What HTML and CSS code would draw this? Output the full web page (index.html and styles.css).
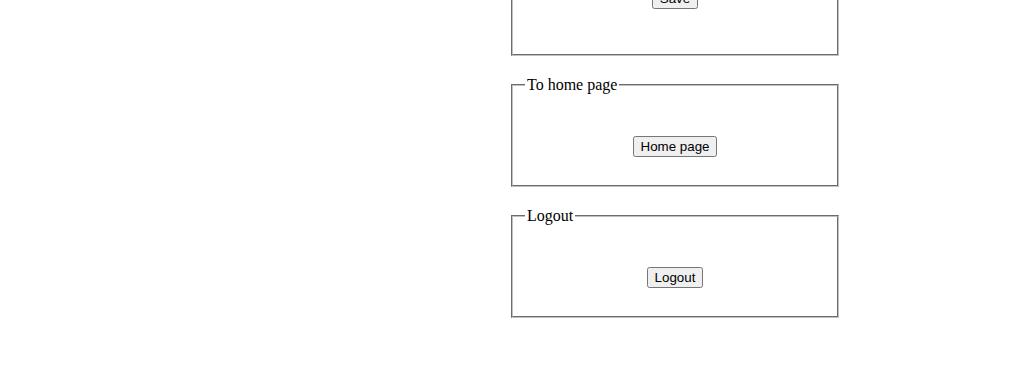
FILE: index.html
```html
<!DOCTYPE html>
<html>
<head>
<meta charset="utf-8">
<link rel="stylesheet" href="styles.css">
</head>
<body>
<div class="page">
  <div class="column">
    <fieldset class="box box-first">
      <legend>Settings</legend>
      <div class="body body-first"><button type="button">Save</button></div>
    </fieldset>
    <fieldset class="box">
      <legend>To home page</legend>
      <div class="body"><button type="button">Home page</button></div>
    </fieldset>
    <fieldset class="box">
      <legend>Logout</legend>
      <div class="body"><button type="button">Logout</button></div>
    </fieldset>
  </div>
</div>
</body>
</html>
```

FILE: styles.css
```css
html, body {
  margin: 0;
  padding: 0;
  background: #fff;
}
body {
  font-family: "Liberation Serif", "Times New Roman", serif;
  font-size: 16px;
  color: #000;
  overflow: hidden;
}
.page {
  display: flex;
  padding-left: 511px;
  margin-top: -90px;
}
.column {
  width: 328px;
  display: flex;
  flex-direction: column;
  gap: 20px;
}
.box {
  margin: 0;
  padding: 0 12px;
  border: 2px groove #c0c0c0;
  min-width: 0;
}
.box legend {
  padding: 0 2px;
  line-height: 18px;
}
.body {
  display: flex;
  justify-content: center;
  padding: 42px 0 28px;
}
.body-first {
  padding: 60px 0 45px;
}
button {
  font-family: "Liberation Sans", Arial, sans-serif;
  font-size: 13.333px;
  padding: 1px 6px;
  line-height: normal;
}
```
